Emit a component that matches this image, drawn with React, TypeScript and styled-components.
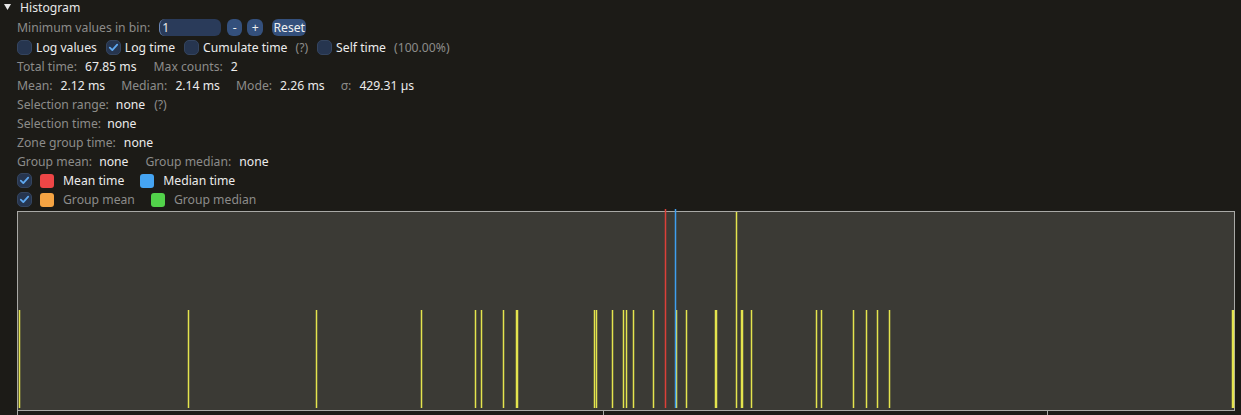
import React from "react";
import styled, { createGlobalStyle } from "styled-components";

const Global = createGlobalStyle`
  html, body { margin: 0; padding: 0; background: #1c1b17; }
  body { font-family: "Noto Sans", "DejaVu Sans", sans-serif; font-size: 12.2px; color: #e8e8e8; }
  * { box-sizing: border-box; }
`;

const Page = styled.div`
  width: 1241px;
  height: 415px;
  overflow: hidden;
  background: #1c1b17;
  display: flex;
  flex-direction: column;
`;

const Header = styled.div`
  height: 17px;
  display: flex;
  align-items: center;
  padding-left: 4px;
  padding-bottom: 3px;
  gap: 8px;
  color: #e8e8e8;
  line-height: 15px;
`;

const Body = styled.div`
  display: flex;
  flex-direction: column;
  padding-left: 17px;
`;

const Row = styled.div<{ $h?: number }>`
  height: ${(p) => p.$h ?? 19}px;
  display: flex;
  align-items: center;
  white-space: nowrap;
  line-height: 15px;
`;

const Label = styled.span<{ $ml?: number }>`
  color: #8c8c8a;
  margin-left: ${(p) => p.$ml ?? 0}px;
`;

const Value = styled.span<{ $ml?: number; $dim?: boolean }>`
  color: ${(p) => (p.$dim ? "#8c8c8a" : "#ececec")};
  margin-left: ${(p) => p.$ml ?? 0}px;
`;

const Input = styled.div`
  margin-left: 9px;
  width: 62px;
  height: 17px;
  border-radius: 6px;
  background: #2a3b5a;
  color: #ececec;
  padding-left: 2px;
  display: flex;
  align-items: center;
  border-left: 1px solid #6a86b4;
`;

const Button = styled.div<{ $w: number; $ml: number }>`
  width: ${(p) => p.$w}px;
  margin-left: ${(p) => p.$ml}px;
  height: 17px;
  border-radius: 6px;
  background: #34507c;
  color: #f0f0f0;
  display: flex;
  align-items: center;
  justify-content: center;
`;

const Box = styled.div<{ $ml?: number }>`
  width: 15px;
  height: 15px;
  border-radius: 5px;
  background: #26354f;
  border: 1px solid #34445e;
  margin-left: ${(p) => p.$ml ?? 0}px;
  display: flex;
  align-items: center;
  justify-content: center;
  flex: none;
`;

const BoxText = styled.span<{ $dim?: boolean }>`
  margin-left: 4px;
  color: ${(p) => (p.$dim ? "#8c8c8a" : "#ececec")};
`;

const Swatch = styled.div<{ $c: string; $ml: number }>`
  width: 14px;
  height: 14px;
  border-radius: 3px;
  background: ${(p) => p.$c};
  margin-left: ${(p) => p.$ml}px;
  flex: none;
`;

const ChartWrap = styled.div`
  height: 206px;
`;

const Check = () => (
  <svg width="11" height="11" viewBox="0 0 11 11">
    <path d="M1.8 5.6 L4.3 8.1 L9.2 2.6" stroke="#5fa8f0" strokeWidth="1.8" fill="none" strokeLinecap="round" strokeLinejoin="round" />
  </svg>
);

const CheckBox: React.FC<{ on?: boolean; label: string; ml?: number; dim?: boolean }> = ({ on, label, ml, dim }) => (
  <>
    <Box $ml={ml}>{on && <Check />}</Box>
    <BoxText $dim={dim}>{label}</BoxText>
  </>
);

const shortBars: [number, number][] = [
  [19, 1], [188, 1], [316, 1], [421, 1], [475, 1], [481, 1], [503, 1], [516, 2],
  [594, 1], [596, 1], [612, 1], [623, 1], [626, 1], [633, 1], [653, 1], [676, 1],
  [686, 1], [715, 2], [741, 2], [751, 1], [816, 1], [821, 1], [853, 1], [866, 1],
  [877, 1], [889, 1], [1232, 2],
];

const OX = 17;
const OY = 209;

const Chart = () => (
  <svg width="1219" height="206" viewBox="0 0 1219 206" style={{ display: "block" }}>
    <g shapeRendering="crispEdges">
      <rect x="0" y="2" width="1218" height="200" fill="#a9a9a6" />
      <rect x="1" y="3" width="1216" height="198" fill="#3b3a35" />
      {[17, 603, 1047].map((x) => (
        <rect key={x} x={x - OX} y={202} width={1} height={4} fill="#a9a9a6" />
      ))}
    </g>
    {shortBars.map(([x, w], i) => (
      <rect key={i} x={x - OX - 0.25} y={310 - OY} width={w + 0.5} height={98} fill="#e4e44e" />
    ))}
    <rect x={736 - OX - 0.25} y={212 - OY} width={1.5} height={196} fill="#e4e44e" />
    <rect x={665 - OX - 0.25} y={0} width={1.5} height={199} fill="#dc4038" />
    <rect x={675 - OX - 0.25} y={0} width={1.5} height={199} fill="#3d9ff0" />
  </svg>
);

export default function App() {
  return (
    <Page>
      <Global />
      <Header>
        <svg width="8" height="8" viewBox="0 0 8 8">
          <polygon points="0,1 7,1 3.5,7" fill="#e8e8e8" />
        </svg>
        <span>Histogram</span>
      </Header>
      <Body>
        <Row $h={21}>
          <Label>Minimum values in bin:</Label>
          <Input>1</Input>
          <Button $w={15} $ml={6}>-</Button>
          <Button $w={16} $ml={5}>+</Button>
          <Button $w={34} $ml={9}>Reset</Button>
        </Row>
        <Row $h={19}>
          <CheckBox label="Log values" />
          <CheckBox on label="Log time" ml={9} />
          <CheckBox label="Cumulate time" ml={9} />
          <Label $ml={8}>(?)</Label>
          <CheckBox label="Self time" ml={9} />
          <Label $ml={8}>(100.00%)</Label>
        </Row>
        <Row>
          <Label>Total time:</Label>
          <Value $ml={8}>67.85 ms</Value>
          <Label $ml={17}>Max counts:</Label>
          <Value $ml={8}>2</Value>
        </Row>
        <Row>
          <Label>Mean:</Label>
          <Value $ml={8}>2.12 ms</Value>
          <Label $ml={16}>Median:</Label>
          <Value $ml={8}>2.14 ms</Value>
          <Label $ml={16}>Mode:</Label>
          <Value $ml={8}>2.26 ms</Value>
          <Label $ml={16}>σ:</Label>
          <Value $ml={8}>429.31 µs</Value>
        </Row>
        <Row>
          <Label>Selection range:</Label>
          <Value $ml={7}>none</Value>
          <Label $ml={9}>(?)</Label>
        </Row>
        <Row>
          <Label>Selection time:</Label>
          <Value $ml={6}>none</Value>
        </Row>
        <Row>
          <Label>Zone group time:</Label>
          <Value $ml={8}>none</Value>
        </Row>
        <Row>
          <Label>Group mean:</Label>
          <Value $ml={7}>none</Value>
          <Label $ml={17}>Group median:</Label>
          <Value $ml={8}>none</Value>
        </Row>
        <Row>
          <Box><Check /></Box>
          <Swatch $c="#ee4646" $ml={8} />
          <Value $ml={9}>Mean time</Value>
          <Swatch $c="#45a4f2" $ml={16} />
          <Value $ml={9}>Median time</Value>
        </Row>
        <Row>
          <Box><Check /></Box>
          <Swatch $c="#f6a443" $ml={8} />
          <Value $ml={9} $dim>Group mean</Value>
          <Swatch $c="#52d24a" $ml={16} />
          <Value $ml={9} $dim>Group median</Value>
        </Row>
        <ChartWrap>
          <Chart />
        </ChartWrap>
      </Body>
    </Page>
  );
}
